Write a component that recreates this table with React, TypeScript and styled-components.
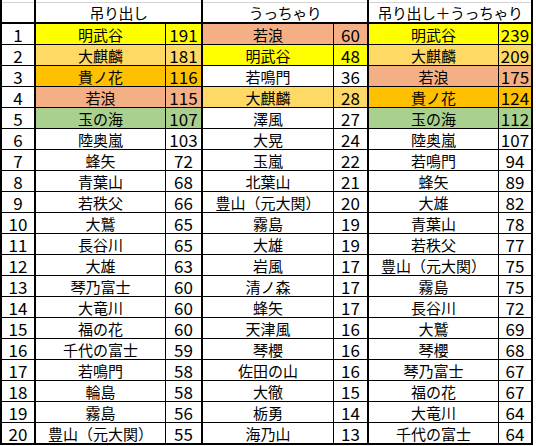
import React from "react";
import styled, { createGlobalStyle } from "styled-components";

const GlobalStyle = createGlobalStyle`
  html, body { margin: 0; padding: 0; background: #ffffff; }
  body { font-family: "Noto Sans CJK JP", "Noto Sans", sans-serif; color: #000; }
`;

const COLORS: Record<string, string> = {
  Y: "#ffff00",
  G: "#ffd966",
  O: "#ffc000",
  S: "#f4b084",
  N: "#a9d08e",
  W: "transparent",
};

type Entry = [string, number, string];
type Row = [Entry, Entry, Entry];

const rows: Row[] = [
  [["明武谷", 191, "Y"], ["若浪", 60, "S"], ["明武谷", 239, "Y"]],
  [["大麒麟", 181, "G"], ["明武谷", 48, "Y"], ["大麒麟", 209, "G"]],
  [["貴ノ花", 116, "O"], ["若鳴門", 36, "W"], ["若浪", 175, "S"]],
  [["若浪", 115, "S"], ["大麒麟", 28, "G"], ["貴ノ花", 124, "O"]],
  [["玉の海", 107, "N"], ["澤風", 27, "W"], ["玉の海", 112, "N"]],
  [["陸奥嵐", 103, "W"], ["大晃", 24, "W"], ["陸奥嵐", 107, "W"]],
  [["蜂矢", 72, "W"], ["玉嵐", 22, "W"], ["若鳴門", 94, "W"]],
  [["青葉山", 68, "W"], ["北葉山", 21, "W"], ["蜂矢", 89, "W"]],
  [["若秩父", 66, "W"], ["豊山（元大関）", 20, "W"], ["大雄", 82, "W"]],
  [["大鷲", 65, "W"], ["霧島", 19, "W"], ["青葉山", 78, "W"]],
  [["長谷川", 65, "W"], ["大雄", 19, "W"], ["若秩父", 77, "W"]],
  [["大雄", 63, "W"], ["岩風", 17, "W"], ["豊山（元大関）", 75, "W"]],
  [["琴乃富士", 60, "W"], ["清ノ森", 17, "W"], ["霧島", 75, "W"]],
  [["大竜川", 60, "W"], ["蜂矢", 17, "W"], ["長谷川", 72, "W"]],
  [["福の花", 60, "W"], ["天津風", 16, "W"], ["大鷲", 69, "W"]],
  [["千代の富士", 59, "W"], ["琴櫻", 16, "W"], ["琴櫻", 68, "W"]],
  [["若鳴門", 58, "W"], ["佐田の山", 16, "W"], ["琴乃富士", 67, "W"]],
  [["輪島", 58, "W"], ["大徹", 15, "W"], ["福の花", 67, "W"]],
  [["霧島", 56, "W"], ["栃勇", 14, "W"], ["大竜川", 64, "W"]],
  [["豊山（元大関）", 55, "W"], ["海乃山", 13, "W"], ["千代の富士", 64, "W"]],
];

const headers = ["吊り出し", "うっちゃり", "吊り出し＋うっちゃり"];

const Sheet = styled.div`
  display: grid;
  grid-template-columns: 34px 130px 37px 131px 35px 130px 34px;
  grid-template-rows: 24px repeat(19, 21px) 22px;
  width: 533px;
  box-sizing: border-box;
  border-left: 2px solid #000;
  font-size: 15px;
`;

const HeadCell = styled.div<{ $span: number }>`
  grid-column: span ${(p) => p.$span};
  box-sizing: border-box;
  border-right: 2px solid #000;
  border-bottom: 2px solid #000;
  background: linear-gradient(to bottom, #fff 0 2px, #d4d4d4 2px 3px, #fff 3px);
  display: flex;
  align-items: center;
  justify-content: center;
  padding-top: 2px;
  white-space: nowrap;
  letter-spacing: -0.5px;
`;

const Cell = styled.div<{ $kind: "idx" | "name" | "num"; $bg?: string; $last?: boolean }>`
  box-sizing: border-box;
  background: ${(p) => p.$bg || "transparent"};
  border-right: ${(p) => (p.$kind === "name" ? "1px" : "2px")} solid #000;
  border-bottom: ${(p) => (p.$last ? "2px" : "1px")} solid #000;
  display: flex;
  align-items: center;
  justify-content: center;
  white-space: nowrap;
  overflow: visible;
  line-height: 1;
  font-size: ${(p) => (p.$kind === "name" ? "15px" : "17px")};
`;

export default function App() {
  return (
    <>
      <GlobalStyle />
      <Sheet>
        <HeadCell $span={1} />
        {headers.map((h) => (
          <HeadCell key={h} $span={2}>
            {h}
          </HeadCell>
        ))}
        {rows.map((row, i) => {
          const last = i === rows.length - 1;
          return (
            <React.Fragment key={i}>
              <Cell $kind="idx" $last={last}>
                {i + 1}
              </Cell>
              {row.map(([name, num, c], j) => (
                <React.Fragment key={j}>
                  <Cell $kind="name" $bg={COLORS[c]} $last={last}>
                    {name}
                  </Cell>
                  <Cell $kind="num" $bg={COLORS[c]} $last={last}>
                    {num}
                  </Cell>
                </React.Fragment>
              ))}
            </React.Fragment>
          );
        })}
      </Sheet>
    </>
  );
}
